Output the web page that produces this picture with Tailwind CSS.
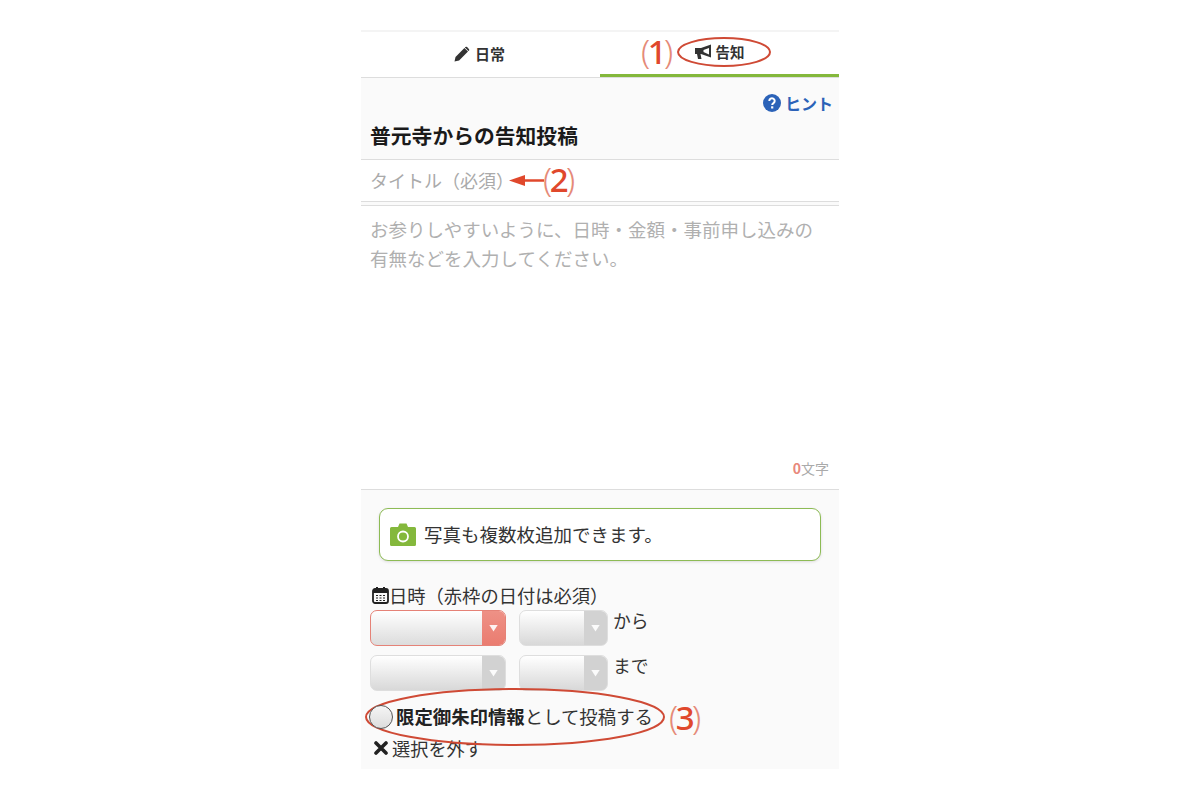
<!DOCTYPE html>
<html lang="ja">
<head>
  <meta charset="UTF-8">
  <title>告知投稿</title>
  <script src="https://cdn.jsdelivr.net/npm/@tailwindcss/browser@4"></script>
</head>
<body class="bg-white font-['Noto_Sans_CJK_JP','Noto_Sans',sans-serif] text-[#222]">
  <div class="relative w-[1200px] h-[800px] overflow-hidden">
    <div class="relative mx-auto mt-[30px] w-[478px] h-[739px] bg-[#fafafa] flex flex-col">

      <!-- tabs -->
      <div class="flex h-[48px] shrink-0 bg-white border-t-2 border-[#f4f4f4] border-b border-b-[#dddddd]">
        <div class="w-[239px] flex items-center justify-center gap-[5px] pb-[1px] pr-[2px] text-[15px] font-bold text-[#333]">
          <svg class="w-[16px] h-[16px]" viewBox="0 0 16 16" fill="#333"><path d="M.5 15.500l1-4.600L10.400 2l3.600 3.600-8.900 8.900zM11.300 1.100a1.300 1.300 0 0 1 1.800 0l1.800 1.800a1.300 1.300 0 0 1 0 1.800l-.4.4L10.900 1.500z"/></svg>
          <span>日常</span>
        </div>
        <div class="w-[239px] flex items-center justify-center gap-[4px] pb-[3px] pr-[1px] text-[14.500px] font-bold text-[#333] border-b-[3px] border-[#84b83c]">
          <svg class="w-[18px] h-[16px]" viewBox="0 0 18 16"><path d="M1 4h6l10-3.500v13L7 10H6.500l1 5H4L3 10H1z" fill="#333"/><path d="M9.500 6L15 4v6.500L9.500 8z" fill="#fff"/></svg>
          <span>告知</span>
        </div>
      </div>

      <!-- heading -->
      <div class="h-[82px] shrink-0 border-b border-[#dddddd] px-[9px] relative">
        <div class="flex justify-end items-center gap-[5px] pt-[15px] text-[16px] font-bold text-[#2b62b8] leading-[20px] -mr-[3px]">
          <svg class="w-[18px] h-[18px] translate-x-[1px]" viewBox="0 0 18 18"><circle cx="9" cy="9" r="9" fill="#2b62b8"/><path d="M6.300 7a2.700 2.700 0 1 1 4.200 2.200c-.9.6-1.300 1-1.300 1.800" fill="none" stroke="#fff" stroke-width="2"/><rect x="8.100" y="12.300" width="2.200" height="2.200" fill="#fff"/></svg>
          <span>ヒント</span>
        </div>
        <h1 class="mt-[7px] text-[20.800px] leading-[30px] font-bold text-[#1a1a1a]">普元寺からの告知投稿</h1>
      </div>

      <!-- title -->
      <div class="h-[42px] shrink-0 bg-white border-b border-[#dddddd] px-[9px] flex items-center text-[18px] text-[#aaaaaa]">タイトル（必須）</div>

      <!-- body -->
      <div class="h-[285px] shrink-0 mt-[3px] bg-white border-t border-b border-[#dddddd] px-[9px] pt-[9px] relative">
        <p class="text-[18.500px] leading-[29px] text-[#b0b0b0]">お参りしやすいように、日時・金額・事前申し込みの<br>有無などを入力してください。</p>
        <div class="absolute right-[10px] bottom-[12px] text-[14px] leading-[18px] text-[#aaaaaa]"><span class="font-bold text-[#e8887c]">0</span>文字</div>
      </div>

      <!-- photo -->
      <div class="mx-[18px] mt-[18px] h-[53px] shrink-0 bg-white border border-[#8dbb55] rounded-[9px] shadow-[0_1px_3px_rgba(0,0,0,0.12)] flex items-center pl-[10px] gap-[8px] text-[18.500px] text-[#333]">
        <svg class="w-[26px] h-[23px]" viewBox="0 0 26 23"><path d="M1.500 4H8l1.500-3.500h7L18 4h6.500A1.500 1.500 0 0 1 26 5.500v16a1.500 1.500 0 0 1-1.500 1.500h-23A1.500 1.500 0 0 1 0 21.500v-16A1.500 1.500 0 0 1 1.500 4z" fill="#84b83c"/><circle cx="13" cy="13.500" r="5" fill="none" stroke="#fff" stroke-width="1.800"/></svg>
        <span>写真も複数枚追加できます。</span>
      </div>

      <!-- date -->
      <div class="mt-[21px] pl-[11px] flex items-center gap-0 text-[18.300px] leading-[26px] text-[#333]">
        <svg class="w-[17px] h-[18px]" viewBox="0 0 17 18"><rect x="1" y="3" width="15" height="14" rx="2" fill="none" stroke="#222" stroke-width="1.800"/><rect x="1" y="3" width="15" height="4" fill="#222"/><rect x="4" y="1" width="2" height="3" fill="#222"/><rect x="11" y="1" width="2" height="3" fill="#222"/><path d="M4 9.500h9M4 12h9M4 14.500h9" stroke="#222" stroke-dasharray="2 1.500"/></svg>
        <span>日時（赤枠の日付は必須）</span>
      </div>

      <div class="flex flex-col gap-[9px] pl-[9px] mt-[2px]">
        <div class="flex gap-[13px]">
          <div class="w-[136px] h-[36px] rounded-[7px] border border-[#e58277] bg-gradient-to-b from-white to-[#dcdcdc] flex justify-end overflow-hidden">
            <div class="w-[23px] bg-gradient-to-b from-[#ee9186] to-[#ea7c70] flex items-center justify-center"><div class="w-[9px] h-[7px] bg-white/90 [clip-path:polygon(0_0,100%_0,50%_100%)]"></div></div>
          </div>
          <div class="w-[89px] h-[36px] rounded-[7px] border border-[#dedede] bg-gradient-to-b from-white to-[#d8d8d8] flex justify-end overflow-hidden">
            <div class="w-[23px] bg-[#d2d2d2] flex items-center justify-center"><div class="w-[9px] h-[7px] bg-white/90 [clip-path:polygon(0_0,100%_0,50%_100%)]"></div></div>
          </div>
          <span class="-ml-[8px] text-[17.800px] leading-[20px] text-[#333]">から</span>
        </div>
        <div class="flex gap-[13px]">
          <div class="w-[136px] h-[36px] rounded-[7px] border border-[#dedede] bg-gradient-to-b from-white to-[#d8d8d8] flex justify-end overflow-hidden">
            <div class="w-[23px] bg-[#d2d2d2] flex items-center justify-center"><div class="w-[9px] h-[7px] bg-white/90 [clip-path:polygon(0_0,100%_0,50%_100%)]"></div></div>
          </div>
          <div class="w-[89px] h-[36px] rounded-[7px] border border-[#dedede] bg-gradient-to-b from-white to-[#d8d8d8] flex justify-end overflow-hidden">
            <div class="w-[23px] bg-[#d2d2d2] flex items-center justify-center"><div class="w-[9px] h-[7px] bg-white/90 [clip-path:polygon(0_0,100%_0,50%_100%)]"></div></div>
          </div>
          <span class="-ml-[8px] text-[17.800px] leading-[20px] text-[#333]">まで</span>
        </div>
      </div>

      <!-- limited -->
      <div class="mt-[14px] pl-[8px] flex items-center gap-[3px] h-[24px] text-[#333]">
        <div class="w-[24px] h-[24px] shrink-0 rounded-full border border-[#555] bg-gradient-to-b from-[#f5f5f5] to-[#dddddd] relative z-10"></div>
        <span class="text-[18.400px] whitespace-nowrap"><b class="text-[#222]">限定御朱印情報</b>として投稿する</span>
      </div>
      <div class="mt-[7px] pl-[13px] flex items-center gap-[4px] text-[18.200px] leading-[24px] text-[#333]">
        <svg class="w-[14px] h-[14px]" viewBox="0 0 14 14"><path d="M2 2l10 10M12 2L2 12" stroke="#222" stroke-width="3.600" stroke-linecap="round"/></svg>
        <span>選択を外す</span>
      </div>
    </div>

    <!-- red annotations drawn over the form -->
    <svg class="absolute inset-0 w-[1200px] h-[800px] pointer-events-none" viewBox="0 0 1200 800" fill="none">
      <ellipse cx="724" cy="52" rx="46" ry="14" stroke-width="2" stroke="#cf4a35"/>
      <ellipse cx="515" cy="717" rx="149" ry="28" stroke-width="2" stroke="#cf4a35"/>
      <path d="M524 180.500H544" stroke-width="2.500" stroke="#e0482c"/>
      <path d="M509 180.500l16-5.500v11z" fill="#e0482c"/>
    </svg>
    <div class="absolute left-[641px] top-[32px] text-[33px] leading-[40px] font-medium text-[#e0482c] font-['Noto_Sans',sans-serif] tracking-[-2.500px]"><span class="font-light text-[#e58a78]">(</span>1<span class="font-light text-[#e58a78]">)</span></div>
    <div class="absolute left-[543px] top-[160px] text-[33px] leading-[40px] font-medium text-[#e0482c] font-['Noto_Sans',sans-serif] tracking-[-2.500px]"><span class="font-light text-[#e58a78]">(</span>2<span class="font-light text-[#e58a78]">)</span></div>
    <div class="absolute left-[669px] top-[698px] text-[33px] leading-[40px] font-medium text-[#e0482c] font-['Noto_Sans',sans-serif] tracking-[-2.500px]"><span class="font-light text-[#e58a78]">(</span>3<span class="font-light text-[#e58a78]">)</span></div>
  </div>
</body>
</html>
